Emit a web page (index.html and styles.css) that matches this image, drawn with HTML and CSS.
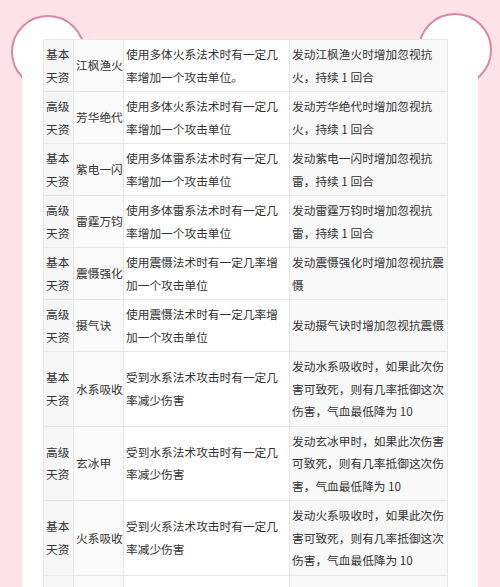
FILE: index.html
```html
<!DOCTYPE html>
<html lang="zh-CN">
<head>
<meta charset="utf-8">
<title>天资表</title>
<link rel="stylesheet" href="styles.css">
</head>
<body>
<div class="page">
  <span class="ear ear-left"></span>
  <span class="ear ear-right"></span>
  <div class="panel">
    <table class="skills">
      <colgroup>
        <col class="c-type"><col class="c-name"><col class="c-desc"><col class="c-effect">
      </colgroup>
      <tbody>
        <tr><td class="type">基本天资</td><td class="name">江枫渔火</td><td class="desc">使用多体火系法术时有一定几率增加一个攻击单位。</td><td class="effect">发动江枫渔火时增加忽视抗火，持续 1 回合</td></tr>
        <tr><td class="type">高级天资</td><td class="name">芳华绝代</td><td class="desc">使用多体火系法术时有一定几率增加一个攻击单位</td><td class="effect">发动芳华绝代时增加忽视抗火，持续 1 回合</td></tr>
        <tr><td class="type">基本天资</td><td class="name">紫电一闪</td><td class="desc">使用多体雷系法术时有一定几率增加一个攻击单位</td><td class="effect">发动紫电一闪时增加忽视抗雷，持续 1 回合</td></tr>
        <tr><td class="type">高级天资</td><td class="name">雷霆万钧</td><td class="desc">使用多体雷系法术时有一定几率增加一个攻击单位</td><td class="effect">发动雷霆万钧时增加忽视抗雷，持续 1 回合</td></tr>
        <tr><td class="type">基本天资</td><td class="name">震慑强化</td><td class="desc">使用震慑法术时有一定几率增加一个攻击单位</td><td class="effect">发动震慑强化时增加忽视抗震慑</td></tr>
        <tr><td class="type">高级天资</td><td class="name">摄气诀</td><td class="desc">使用震慑法术时有一定几率增加一个攻击单位</td><td class="effect">发动摄气诀时增加忽视抗震慑</td></tr>
        <tr><td class="type">基本天资</td><td class="name">水系吸收</td><td class="desc">受到水系法术攻击时有一定几率减少伤害</td><td class="effect">发动水系吸收时，如果此次伤害可致死，则有几率抵御这次伤害，气血最低降为 10</td></tr>
        <tr><td class="type">高级天资</td><td class="name">玄冰甲</td><td class="desc">受到水系法术攻击时有一定几率减少伤害</td><td class="effect">发动玄冰甲时，如果此次伤害可致死，则有几率抵御这次伤害，气血最低降为 10</td></tr>
        <tr><td class="type">基本天资</td><td class="name">火系吸收</td><td class="desc">受到火系法术攻击时有一定几率减少伤害</td><td class="effect">发动火系吸收时，如果此次伤害可致死，则有几率抵御这次伤害，气血最低降为 10</td></tr>
        <tr class="next"><td class="type"></td><td class="name"></td><td class="desc"></td><td class="effect"></td></tr>
      </tbody>
    </table>
  </div>
</div>
</body>
</html>
```
FILE: styles.css
```css
html {
  overflow: hidden;
}
body {
  margin: 0;
  background: #fde2e7;
  font-family: "Noto Sans CJK SC", "Noto Sans", sans-serif;
  color: #333;
}
.page {
  position: relative;
  padding-top: 39px;
  min-height: 548px;
}
.ear {
  position: absolute;
  width: 70px;
  height: 70px;
  border: 2px solid #d7889e;
  border-radius: 50%;
  background: #fff;
  z-index: 0;
}
.ear-left {
  left: 11px;
  top: 15px;
}
.ear-right {
  left: 418px;
  top: 13px;
}
.panel {
  position: relative;
  z-index: 1;
  margin: 0 22px;
  background: #fff;
  padding: 0 31px 0 21px;
  min-height: 560px;
}
.skills {
  border-collapse: collapse;
  table-layout: fixed;
  width: 404px;
  font-size: 11.7px;
  line-height: 22.5px;
}
.c-type { width: 30px; }
.c-name { width: 50px; }
.c-desc { width: 166px; }
.c-effect { width: 158px; }
.skills td {
  border: 1px solid #e6e6e6;
  padding: 3px 2px;
  vertical-align: middle;
  text-align: left;
}
.skills tr.next td {
  height: 60px;
}
.skills td.type {
  background: #f6f6f6;
}
.skills td.name {
  background: #fafafa;
  white-space: nowrap;
  padding-left: 2px;
  padding-right: 0;
}
.skills td.desc {
  background: #fff;
}
.skills td.effect {
  background: #f8f8f8;
  padding-right: 1px;
}
```
